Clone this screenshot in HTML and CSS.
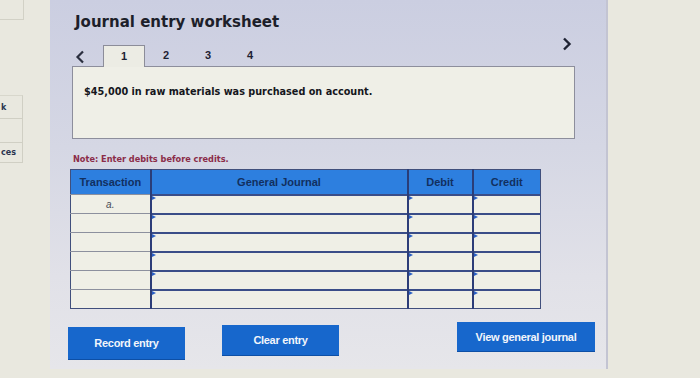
FILE: index.html
```html
<!DOCTYPE html>
<html>
<head>
<meta charset="utf-8">
<link rel="stylesheet" href="styles.css">
</head>
<body>
<div class="page">
  <aside class="side">
    <div class="side-top"></div>
    <div class="side-list">
      <div class="side-item">k</div>
      <div class="side-item"></div>
      <div class="side-item">ces</div>
    </div>
  </aside>
  <main class="panel">
    <h1 class="title">Journal entry worksheet</h1>
    <div class="tabs">
      <span class="nav prev"><svg width="10" height="14" viewBox="0 0 10 14"><path d="M8 1.5 L2.5 7 L8 12.5" fill="none" stroke="#2b2f3f" stroke-width="2.2"/></svg></span>
      <span class="tab active">1</span>
      <span class="tab">2</span>
      <span class="tab">3</span>
      <span class="tab">4</span>
      <span class="nav next"><svg width="10" height="14" viewBox="0 0 10 14"><path d="M2 1.5 L7.5 7 L2 12.5" fill="none" stroke="#1f2333" stroke-width="2.4"/></svg></span>
    </div>
    <div class="content">$45,000 in raw materials was purchased on account.</div>
    <p class="note">Note: Enter debits before credits.</p>
    <table class="journal">
      <thead>
        <tr><th class="c-tr">Transaction</th><th class="c-gj">General Journal</th><th class="c-dr">Debit</th><th class="c-cr">Credit</th></tr>
      </thead>
      <tbody>
        <tr><td class="c-tr lbl">a.</td><td class="inp"></td><td class="inp"></td><td class="inp"></td></tr>
        <tr><td class="c-tr"></td><td class="inp"></td><td class="inp"></td><td class="inp"></td></tr>
        <tr><td class="c-tr"></td><td class="inp"></td><td class="inp"></td><td class="inp"></td></tr>
        <tr><td class="c-tr"></td><td class="inp"></td><td class="inp"></td><td class="inp"></td></tr>
        <tr><td class="c-tr"></td><td class="inp"></td><td class="inp"></td><td class="inp"></td></tr>
        <tr><td class="c-tr"></td><td class="inp"></td><td class="inp"></td><td class="inp"></td></tr>
      </tbody>
    </table>
    <div class="actions">
      <button class="btn rec">Record entry</button>
      <button class="btn clr">Clear entry</button>
      <button class="btn view">View general journal</button>
    </div>
  </main>
</div>
</body>
</html>
```
FILE: styles.css
```css
* { box-sizing: border-box; }
html, body { margin: 0; padding: 0; }
body {
  width: 700px;
  height: 378px;
  overflow: hidden;
  background: #e9e8df;
  font-family: "DejaVu Sans", Verdana, sans-serif;
}
.page {
  display: flex;
  height: 378px;
}
.side {
  width: 50px;
  flex: none;
  display: flex;
  flex-direction: column;
}
.side-top {
  width: 24px;
  height: 20px;
  border: 1px solid #d2d1c6;
  border-top: none;
  border-left: none;
}
.side-list {
  margin-top: 75px;
  width: 23px;
  display: flex;
  flex-direction: column;
}
.side-item {
  height: 24px;
  border: 1px solid #d0cfc4;
  border-left: none;
  border-top-color: #d8d7cc;
  font-size: 8px;
  color: #2b3550;
  font-weight: bold;
  display: flex;
  align-items: center;
  padding-left: 1px;
  overflow: hidden;
}
.side-item + .side-item { border-top: none; }
.side-item:last-child { height: 20px; }
.panel {
  width: 558px;
  height: 369px;
  flex: none;
  background: linear-gradient(180deg, #cbcee1 0%, #d5d7e4 40%, #e1e1e8 75%, #e6e6ea 100%);
  border-right: 2px solid #c3c4d2;
  padding: 12px 0 0 22px;
  display: flex;
  flex-direction: column;
}
.title {
  margin: 0 0 0 3px;
  font-size: 15px;
  line-height: 20px;
  font-weight: bold;
  color: #1d1f2a;
}
.tabs {
  margin-top: 13px;
  display: flex;
  align-items: flex-end;
  height: 22px;
  width: 503px;
  position: relative;
  z-index: 1;
}
.nav {
  display: flex;
  align-items: center;
  justify-content: center;
  height: 21px;
}
.prev { width: 16px; margin-right: 15px; }
.next {
  margin-left: auto;
  align-self: flex-start;
  margin-top: -12px;
  width: 16px;
}
.tab {
  width: 42px;
  height: 22px;
  display: flex;
  align-items: center;
  justify-content: center;
  font-family: "Liberation Sans", Arial, sans-serif;
  font-weight: bold;
  font-size: 11px;
  color: #1e2233;
  padding-bottom: 2px;
}
.tab.active {
  background: #ecece4;
  border: 1px solid #8c8d99;
  border-bottom: none;
}
.content {
  margin-top: -1px;
  width: 503px;
  height: 73px;
  background: #efefe7;
  border: 1px solid #8d8e9c;
  padding: 19px 0 0 11px;
  font-size: 9.7px;
  font-weight: bold;
  color: #15161c;
}
.note {
  margin: 15px 0 0 1px;
  font-size: 8.2px;
  font-weight: bold;
  color: #8b2c48;
  line-height: 11px;
}
.journal {
  margin-top: 4px;
  margin-left: -2px;
  width: 470px;
  border-collapse: collapse;
  table-layout: fixed;
  border: 1.5px solid #404f7c;
}
.journal th {
  height: 25px;
  background: #2d7fdf;
  color: #12305f;
  font-family: "Liberation Sans", Arial, sans-serif;
  font-size: 11px;
  font-weight: bold;
  border-left: 2px solid #2a3d78;
  padding: 0;
}
.journal th:first-child { border-left: none; }
.c-tr { width: 80px; }
.c-gj { width: 257px; }
.c-dr { width: 65px; }
.c-cr { width: 68px; }
.journal td {
  height: 19px;
  padding: 0;
  background: #efefe6;
  border-top: 2px solid #3a4d88;
  border-left: 2px solid #2c3d78;
  position: relative;
}
.journal td.c-tr {
  border-left: none;
  border-top: 1.5px solid #8c909e;
}
.journal td.lbl {
  text-align: center;
  font-family: "Liberation Sans", Arial, sans-serif;
  font-style: italic;
  font-size: 10px;
  color: #4a4d57;
}
.journal td.inp::before {
  content: "";
  position: absolute;
  left: 0;
  top: 0;
  border-left: 4px solid #2a5fc4;
  border-top: 2.5px solid transparent;
  border-bottom: 2.5px solid transparent;
}
.actions {
  margin-top: 16px;
  margin-left: -4px;
  display: flex;
  align-items: flex-start;
  width: 527px;
}
.btn {
  border: none;
  background: #1767cc;
  color: #f2f5fb;
  font-family: "Liberation Sans", Arial, sans-serif;
  font-weight: bold;
  font-size: 11px;
  letter-spacing: -0.3px;
  height: 32px;
  padding: 0;
  box-shadow: 0 1px 0 #0d4fa6;
}
.rec { width: 117px; margin-top: 2px; }
.clr { width: 117px; margin-left: 37px; height: 30px; }
.view { width: 138px; margin-left: auto; height: 29px; margin-top: -3px; }
```
